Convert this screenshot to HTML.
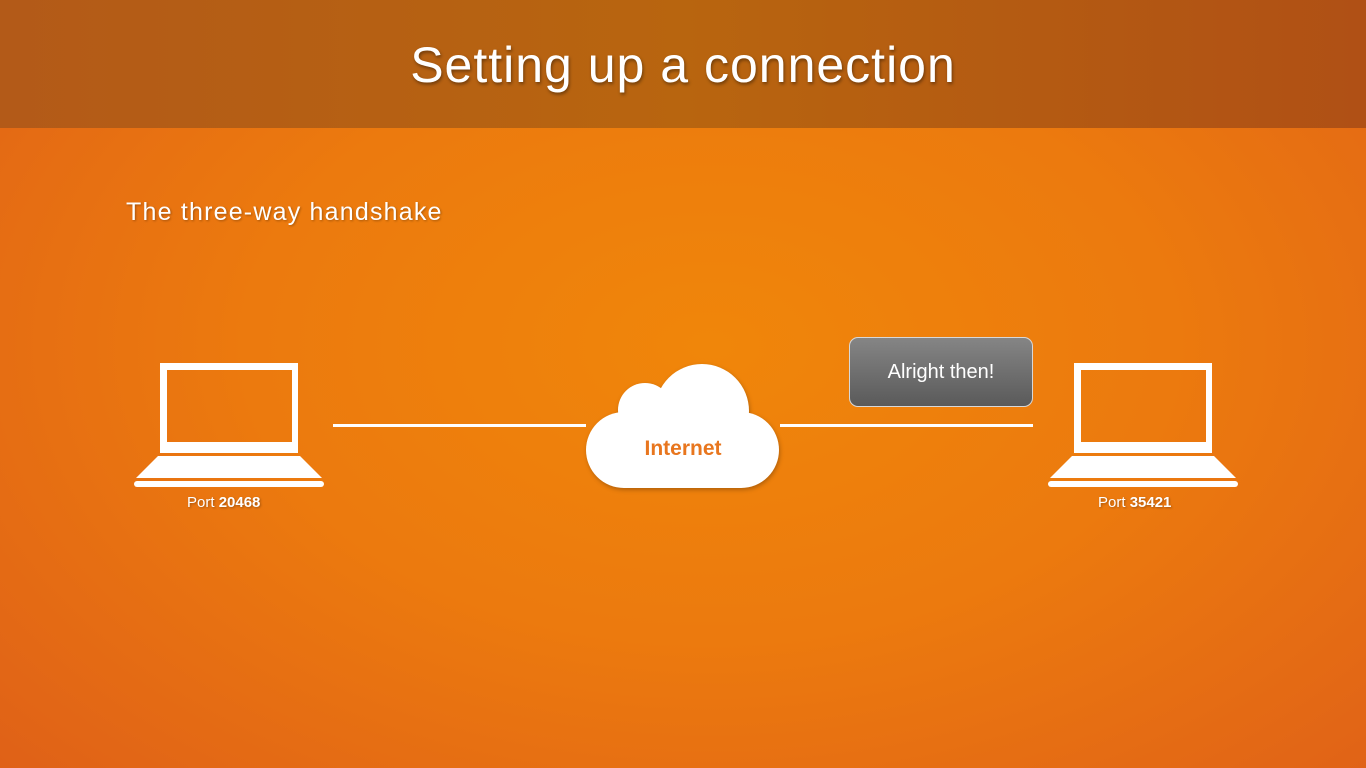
<!DOCTYPE html>
<html><head><style>
html,body{margin:0;padding:0}
body{width:1366px;height:768px;position:relative;overflow:hidden;font-family:"Liberation Sans",sans-serif;
background:radial-gradient(ellipse 75% 85% at 52% 45%,#f0860a 0%,#ec7a0e 45%,#e26616 85%,#de5e18 100%);}
.hdr{position:absolute;left:0;top:0;width:1366px;height:128px;background:linear-gradient(90deg,#b35a18,#b8650f 50%,#b05015);}
.title{position:absolute;top:36px;left:0;width:1366px;text-align:center;color:#fff;font-size:50px;letter-spacing:1px;text-shadow:1px 2px 3px rgba(0,0,0,.4);}
.sub{position:absolute;left:126px;top:198px;color:#fff;font-size:25px;letter-spacing:1.2px;text-shadow:1px 1px 2px rgba(0,0,0,.3);}
.port{position:absolute;color:#fff;font-size:15px;text-shadow:1px 1px 2px rgba(0,0,0,.3);}
.bubble{position:absolute;left:849px;top:337px;width:184px;height:70px;border:1.5px solid #d8d8d8;border-radius:9px;
background:linear-gradient(#858585,#5a5a5a);color:#fff;font-size:20px;text-align:center;line-height:68px;box-sizing:border-box;}
</style></head><body>
<div class="hdr"></div>
<div class="title">Setting up a connection</div>
<div class="sub">The three-way handshake</div>
<svg width="1366" height="768" style="position:absolute;left:0;top:0">
<g fill="#fff">
<path fill-rule="evenodd" d="M160 363h138v90h-138zM167 370v72h125v-72z"/>
<path d="M158 456h142l22 22h-186z"/>
<rect x="134" y="481" width="190" height="6" rx="3"/>
<path fill-rule="evenodd" d="M1074 363h138v90h-138zM1081 370v72h125v-72z"/>
<path d="M1072 456h142l22 22h-186z"/>
<rect x="1048" y="481" width="190" height="6" rx="3"/>
<rect x="333" y="424" width="253" height="3"/>
<rect x="780" y="424" width="253" height="3"/>
<g style="filter:drop-shadow(1px 2px 2px rgba(0,0,0,.25))">
<rect x="586" y="412" width="193" height="76" rx="38"/>
<circle cx="702" cy="411" r="47"/>
<circle cx="645" cy="410" r="27"/>
</g>
</g>
<text x="683" y="455" text-anchor="middle" font-family="Liberation Sans" font-weight="bold" font-size="21" fill="#e8761e">Internet</text>
</svg>
<div class="port" style="left:187px;top:494px">Port <b>20468</b></div>
<div class="port" style="left:1098px;top:494px">Port <b>35421</b></div>
<div class="bubble">Alright then!</div>
</body></html>
